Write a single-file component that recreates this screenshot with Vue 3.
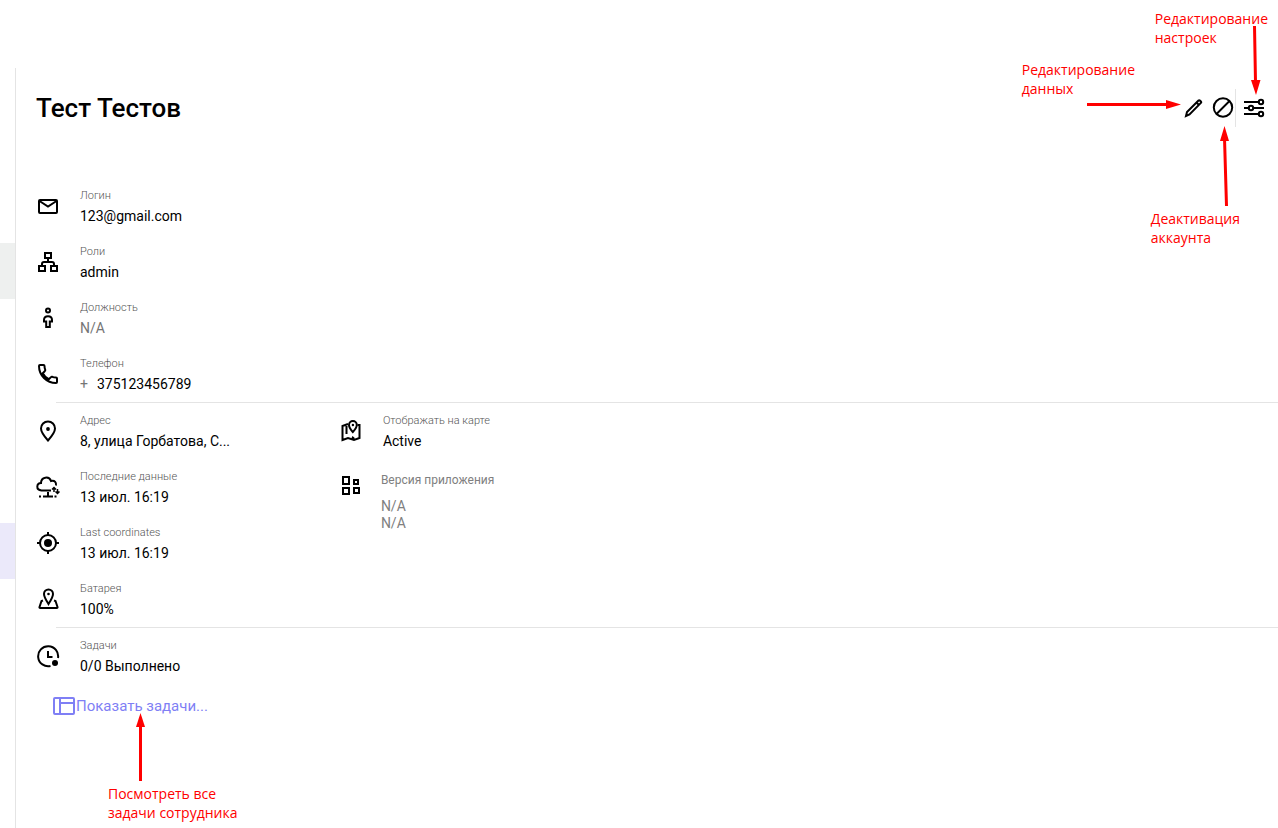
<script setup>
const account = [
  { icon: 'mail', label: 'Логин', value: '123@gmail.com' },
  { icon: 'roles', label: 'Роли', value: 'admin' },
  { icon: 'person', label: 'Должность', value: 'N/A', muted: true },
  { icon: 'phone', label: 'Телефон', prefix: '+', value: '375123456789' },
]
const device = [
  { icon: 'pin', label: 'Адрес', value: '8, улица Горбатова, С...' },
  { icon: 'cloud', label: 'Последние данные', value: '13 июл. 16:19' },
  { icon: 'target', label: 'Last coordinates', value: '13 июл. 16:19' },
  { icon: 'place', label: 'Батарея', value: '100%' },
]
const extra = [{ icon: 'map', label: 'Отображать на карте', value: 'Active' }]
const tasks = [{ icon: 'clock', label: 'Задачи', value: '0/0 Выполнено' }]
const sections = [
  { name: 'account', columns: [account] },
  { name: 'device', columns: [device, extra] },
  { name: 'tasks', columns: [tasks] },
]
const icons = {
  mail: '<rect x="3" y="6" width="18" height="13" rx="1"/><path d="M3.500 7 12 12.500 20.500 7"/>',
  roles: '<path d="M9 3h6v5H9zM3 16h6v5H3zM15 16h6v5h-6zM12 8v4M6 16v-2q0-2 2-2h8q2 0 2 2v2"/>',
  person: '<circle cx="12" cy="4.500" r="2"/><path d="M10.200 21v-5.500H8V14c0-5 8-5 8 0v1.500h-2.200V21z"/>',
  phone: '<path d="M3 4q0-1 1-1h3.500q1 0 1 1 0 2 .7 3.700.3.800-.3 1.300L6.800 11.200c1.300 2.700 3.300 4.700 6 6l2.200-2.100q.5-.6 1.300-.3 1.700.7 3.700.7 1 0 1 1V20q0 1-1 1C10.600 21 3 13.400 3 4z"/>',
  pin: '<path d="M12 21.500C8 17 5 13 5 9.500a7 7 0 0 1 14 0C19 13 16 17 12 21.500z"/><circle class="solid" cx="12" cy="10" r="1.900"/>',
  cloud: '<path d="M15 15.500H5.500C-.5 15 .5 8 5 8c0-6 8-7.500 10-2 4-1 5.500 2 5 4.500M12 17v4"/><path d="M3 21.500h2m2 0h10m1.500 0h2"/><path stroke-width="1.500" d="M18 17v-4m-2 1.500 2-2 2 2M21.500 14v4m-2-1.500 2 2 2-2"/>',
  target: '<circle cx="12" cy="12" r="8"/><circle class="solid" cx="12" cy="12" r="4"/><path d="M12 1v3m0 16v3M1 12h3m16 0h3"/>',
  place: '<path d="M12.500 17C10 13 8 10 8 7a4.500 4.500 0 0 1 9 0c0 3-2 6-4.500 10zM7 13.500 5.500 14 3.500 20q-.3 1 .7 1h16.600q1 0 .7-1l-2-6-1.500-.5"/><circle class="solid" cx="12.500" cy="7" r="1.300"/>',
  map: '<path d="M9 5 3.500 7v14l5.500-2 6 2 5.500-2V6L18.500 6M7.500 7v8M15 21q0-2-2-3"/><path d="M13.800 13C11.500 10.500 10 8.500 10 6a3.900 3.900 0 0 1 7.800 0c0 2.500-1.700 4.500-4 7z"/><circle class="solid" cx="13.900" cy="6" r="1.200"/>',
  apps: '<path d="M4 3h6v7H4zM4 14h6v6H4zM15 6h4v4h-4zM15 14h5v5h-5z"/>',
  clock: '<path d="M22 14a10 10 0 1 0-7.500 8M12 7v6h4.500"/><circle class="solid" cx="19" cy="19" r="3"/>',
  edit: '<path d="m5 20 1-4L17.500 4.500q.7-.7 1.400 0l1 1q.7.700 0 1.400L8.500 18.500zM15.500 6.500l2 2"/>',
  block: '<circle cx="12" cy="11.500" r="9.200"/><path d="m5.500 18 13-13"/>',
  tune: '<path d="M2 6h15M2 12h5m5 0h10M2 18h15"/><circle cx="19" cy="6" r="2.200"/><circle cx="9" cy="12" r="2.200"/><circle cx="19" cy="18" r="2.200"/>',
}
</script>

<template>
  <div class="page">
    <aside class="rail">
      <span class="rail-item hovered"></span>
      <span class="rail-item selected"></span>
    </aside>
    <main class="panel">
      <header class="header">
        <h1>Тест Тестов</h1>
        <div class="actions">
          <button type="button" aria-label="Редактирование данных"><svg class="icon" viewBox="0 0 24 24" v-html="icons.edit"></svg></button>
          <button type="button" aria-label="Деактивация аккаунта"><svg class="icon" viewBox="0 0 24 24" v-html="icons.block"></svg></button>
          <button type="button" class="settings" aria-label="Редактирование настроек"><svg class="icon" viewBox="0 0 24 24" v-html="icons.tune"></svg></button>
        </div>
      </header>

      <section v-for="s in sections" :key="s.name" class="section">
        <div v-for="(column, i) in s.columns" :key="i">
          <dl v-for="f in column" :key="f.label" class="field">
            <svg class="icon" viewBox="0 0 24 24" v-html="icons[f.icon]"></svg>
            <div>
              <dt>{{ f.label }}</dt>
              <dd :class="{ muted: f.muted }"><span v-if="f.prefix" class="prefix">{{ f.prefix }}</span>{{ f.value }}</dd>
            </div>
          </dl>
          <dl v-if="s.name === 'device' && i === 1" class="field version">
            <svg class="icon" viewBox="0 0 24 24" v-html="icons.apps"></svg>
            <div>
              <dt>Версия приложения</dt>
              <dd>N/A</dd>
              <dd>N/A</dd>
            </div>
          </dl>
        </div>
      </section>

      <a href="#" class="show-tasks">
        <svg viewBox="0 0 24 20"><rect x="2" y="2" width="20" height="16" rx="1"/><path d="M8 2v16M8 7h14"/></svg>
        <span>Показать задачи...</span>
      </a>
    </main>

    <div class="note note-settings">Редактирование<br>настроек</div>
    <div class="note note-edit">Редактирование<br>данных</div>
    <div class="note note-block">Деактивация<br>аккаунта</div>
    <div class="note note-tasks">Посмотреть все<br>задачи сотрудника</div>
    <svg class="arrows arrows-top" viewBox="0 0 198 210">
      <path d="M7 104.500h80M174.500 26l1 56M146.500 206l-2-68"/>
      <path class="head" d="M101 104.500 86 100v9zM176 95l-5-15h9.500zM144.500 126l-4.500 15h9z"/>
    </svg>
    <svg class="arrows arrow-tasks" viewBox="0 0 12 70">
      <path d="M6.500 68V14"/>
      <path class="head" d="M6.500 0 2 14h9z"/>
    </svg>
  </div>
</template>

<style>
body { margin: 0; background: #fff; }
</style>

<style scoped>
* { box-sizing: border-box; }
.page {
  position: relative;
  display: flex;
  min-height: 100vh;
  padding-top: 68px;
  overflow: hidden;
  font-family: Roboto, "Liberation Sans", sans-serif;
  color: #000;
}
.rail { width: 15px; padding-top: 175px; flex: none; }
.rail-item { display: block; height: 56px; }
.hovered { background: #eef0ef; margin-bottom: 224px; }
.selected { background: #ebe9fa; }
.panel { flex: 1; min-width: 0; border-left: 1px solid #e4e4e4; }
.header {
  display: flex;
  justify-content: space-between;
  align-items: center;
  height: 80px;
  margin-bottom: 30px;
  padding: 0 8px 0 20px;
}
h1 { margin: 0; font-size: 26px; line-height: 32px; font-weight: 500; }
.actions { display: flex; align-items: center; }
button {
  display: flex;
  align-items: center;
  height: 38px;
  padding: 0 3px;
  border: 0;
  background: none;
  cursor: pointer;
}
button:nth-child(2) { padding-right: 0; }
.settings { border-left: 1px solid #e4e4e4; padding: 0 4px 0 6px; }
.icon {
  width: 24px;
  height: 24px;
  flex: none;
  fill: none;
  stroke: #000;
  stroke-width: 2;
}
.icon :deep(.solid) { fill: #000; stroke: none; }
.section { position: relative; display: grid; grid-template-columns: 24% 1fr; }
.section + .section { padding-top: 1px; }
.section + .section::before {
  content: "";
  position: absolute;
  top: 0;
  left: 40px;
  right: 0;
  height: 1px;
  background: #e4e4e4;
}
.field {
  display: flex;
  align-items: center;
  gap: 20px;
  height: 56px;
  margin: 0;
  padding-left: 20px;
}
dt { font-size: 11px; line-height: 20px; font-weight: 300; color: #555; }
dd { margin: 0; font-size: 14px; line-height: 20px; }
.muted, .prefix { color: #757575; }
.prefix { margin-right: 9px; }
.version { align-items: flex-start; height: 80px; padding-top: 10px; gap: 18px; }
.version .icon { margin-top: 5px; }
.version dt { font-size: 12px; line-height: 22px; margin-bottom: 7px; font-weight: 400; color: #808080; }
.version dd { line-height: 17px; color: #808080; }
.show-tasks {
  display: inline-flex;
  align-items: center;
  height: 24px;
  margin: 10px 0 0 36px;
  color: #7f7ff5;
  font-size: 15px;
  text-decoration: none;
}
.show-tasks svg { width: 24px; height: 20px; fill: none; stroke: #7f7ff5; stroke-width: 2; }
.note {
  position: absolute;
  color: #f00;
  font: 14px/19px "Open Sans", "Noto Sans", sans-serif;
  white-space: nowrap;
}
.note-settings { top: 9px; right: 10px; }
.note-edit { top: 60px; right: 143px; }
.note-block { top: 209px; right: 38px; }
.note-tasks { top: 784px; left: 108px; }
.arrows { position: absolute; fill: none; stroke: #f00; stroke-width: 3; pointer-events: none; }
.arrows .head { fill: #f00; stroke: none; }
.arrows-top { top: 0; right: 0; width: 198px; height: 210px; }
.arrow-tasks { top: 713px; left: 134px; width: 12px; height: 70px; }
</style>
